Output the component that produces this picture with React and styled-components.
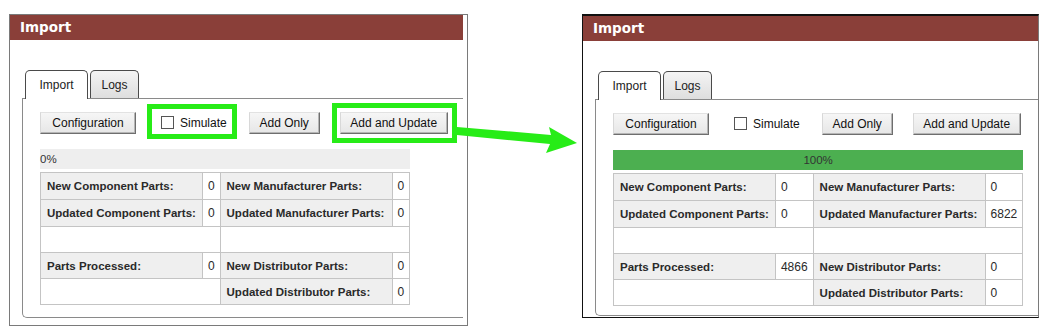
import React from "react";
import styled, { createGlobalStyle, css } from "styled-components";

const GlobalStyle = createGlobalStyle`
  body {
    margin: 0;
    background: #ffffff;
  }
`;

const FONT = `"Liberation Sans", Arial, sans-serif`;

const Stage = styled.div`
  position: relative;
  box-sizing: border-box;
  width: 1043px;
  height: 330px;
  overflow: hidden;
  display: flex;
  align-items: flex-start;
  padding: 14px 0 0 9px;
  font-family: ${FONT};
  color: #222;
`;

const Window = styled.section`
  box-sizing: border-box;
  width: ${(p) => p.$w}px;
  height: ${(p) => p.$h}px;
  margin-left: ${(p) => p.$ml || 0}px;
  border: 1px solid #7a7a7a;
  padding-right: ${(p) => p.$clip || 0}px;
  padding-bottom: ${(p) => p.$gap || 0}px;
  display: flex;
  flex-direction: column;
  overflow: hidden;
  ${(p) =>
    p.$dark &&
    css`
      border-color: #111 #7a7a7a #111 #111;
      border-top-width: 2px;
    `}
`;

const Header = styled.h2`
  margin: 0;
  height: 25px;
  line-height: 24px;
  padding-left: 10px;
  background: #8a3f39;
  color: #fff;
  font-family: "DejaVu Sans", sans-serif;
  font-size: 13.5px;
  font-weight: bold;
`;

const Body = styled.div`
  flex: 1;
  display: flex;
  flex-direction: column;
  padding: 30px 0 0 12px;
`;

const TabList = styled.div`
  display: flex;
  align-items: flex-end;
  gap: 2px;
  margin-left: 3px;
  height: 28px;
  position: relative;
  z-index: 1;
`;

const Tab = styled.div`
  box-sizing: border-box;
  width: ${(p) => p.$w}px;
  height: 28px;
  border: 1px solid #4a4a4a;
  border-bottom: none;
  border-radius: 5px 5px 0 0;
  display: flex;
  align-items: center;
  justify-content: center;
  font-size: 12px;
  color: #222;
  background: linear-gradient(#f4f4f4, #dedede);
  ${(p) =>
    p.$active &&
    css`
      height: 29px;
      margin-bottom: -1px;
      background: #fff;
    `}
`;

const TabPanel = styled.div`
  flex: 1;
  border: 1px solid #8a8a8a;
  border-right: none;
  border-radius: 0 0 0 5px;
  padding: 13px 0 0 17px;
`;

const ButtonRow = styled.div`
  display: flex;
  align-items: stretch;
  height: 22px;
`;

const Slot = styled.div`
  position: relative;
  display: flex;
  margin-left: ${(p) => p.$ml || 0}px;

  ${(p) =>
    p.$mark &&
    css`
      &::after {
        content: "";
        position: absolute;
        inset: ${p.$mark};
        border: 5px solid #27ec17;
        pointer-events: none;
      }
    `}
`;

const Button = styled.button`
  box-sizing: border-box;
  width: ${(p) => p.$w}px;
  height: 22px;
  padding: 0;
  font-family: ${FONT};
  font-size: 12px;
  color: #111;
  background: linear-gradient(#f6f6f6, #e6e6e6);
  border: 1px solid;
  border-color: #e2e2e2 #6e6e6e #6e6e6e #d8d8d8;
  box-shadow: inset -1px -1px 0 #b5b5b5;
`;

const CheckLabel = styled.label`
  display: flex;
  align-items: center;
  gap: 6px;
  font-size: 12px;
  color: #111;
`;

const Box = styled.span`
  box-sizing: border-box;
  width: 13px;
  height: 13px;
  border: 1px solid #555;
  background: #fff;
  margin-top: -1px;
`;

const Results = styled.div`
  display: flex;
  flex-direction: column;
  gap: 3px;
  width: fit-content;
  margin-top: 15px;
`;

const Progress = styled.div`
  height: 20px;
  background: #eeeeee;
  display: flex;
`;

const Fill = styled.div`
  height: 100%;
  background: #4caf50;
  text-align: center;
  white-space: nowrap;
  line-height: 20px;
  font-size: 11.5px;
  color: #333;
`;

const Table = styled.table`
  border-collapse: collapse;
  font-size: 12px;
`;

const Cell = styled.td`
  box-sizing: border-box;
  height: ${(p) => p.$h || 26}px;
  padding: 0 ${(p) => (p.$label ? 6 : 5)}px;
  border: 1px solid #c4c4c4;
  white-space: nowrap;
  background: ${(p) => (p.$label ? "#efefef" : "#fff")};
  font-weight: ${(p) => (p.$label ? "bold" : "normal")};
  font-size: ${(p) => (p.$label ? "11.5px" : "12px")};
  color: #2a2a2a;
  ${(p) => p.$w && css`width: ${p.$w}px;`}
`;

const Arrow = styled.svg`
  position: absolute;
  left: 450px;
  top: 120px;
`;

const Panel = ({ data, pct, marks, ...rest }) => (
  <Window {...rest}>
    <Header>Import</Header>
    <Body>
      <TabList>
        <Tab $active $w={63}>Import</Tab>
        <Tab $w={49}>Logs</Tab>
      </TabList>
      <TabPanel>
        <ButtonRow>
          <Slot>
            <Button $w={96}>Configuration</Button>
          </Slot>
          <Slot $ml={25} $mark={marks && "-8px -10px -5px -14px"}>
            <CheckLabel>
              <Box />
              Simulate
            </CheckLabel>
          </Slot>
          <Slot $ml={22}>
            <Button $w={71}>Add Only</Button>
          </Slot>
          <Slot $ml={20} $mark={marks && "-9px -9px -9px -8px"}>
            <Button $w={108}>Add and Update</Button>
          </Slot>
        </ButtonRow>
        <Results>
          <Progress>
            <Fill style={{ width: `${pct}%` }}>{pct}%</Fill>
          </Progress>
          <Table>
            <tbody>
              <tr>
                <Cell $label $w={160} $h={27}>New Component Parts:</Cell>
                <Cell $h={27}>{data.newComp}</Cell>
                <Cell $label $w={172} $h={27}>New Manufacturer Parts:</Cell>
                <Cell $h={27}>{data.newMfr}</Cell>
              </tr>
              <tr>
                <Cell $label $h={27}>Updated Component Parts:</Cell>
                <Cell $h={27}>{data.updComp}</Cell>
                <Cell $label $h={27}>Updated Manufacturer Parts:</Cell>
                <Cell $h={27}>{data.updMfr}</Cell>
              </tr>
              <tr>
                <Cell colSpan={2} />
                <Cell colSpan={2} />
              </tr>
              <tr>
                <Cell $label>Parts Processed:</Cell>
                <Cell>{data.processed}</Cell>
                <Cell $label>New Distributor Parts:</Cell>
                <Cell>{data.newDist}</Cell>
              </tr>
              <tr>
                <Cell colSpan={2} />
                <Cell $label>Updated Distributor Parts:</Cell>
                <Cell>{data.updDist}</Cell>
              </tr>
            </tbody>
          </Table>
        </Results>
      </TabPanel>
    </Body>
  </Window>
);

const before = { newComp: 0, newMfr: 0, updComp: 0, updMfr: 0, processed: 0, newDist: 0, updDist: 0 };
const after = { newComp: 0, newMfr: 0, updComp: 0, updMfr: 6822, processed: 4866, newDist: 0, updDist: 0 };

export default function App() {
  return (
    <>
      <GlobalStyle />
      <Stage>
        <Panel data={before} pct={0} marks $w={459} $h={312} $clip={4} $gap={7} />
        <Panel data={after} pct={100} $w={457} $h={304} $ml={114} $gap={1} $dark />
        <Arrow width="135" height="40" viewBox="0 0 135 40">
          <polygon
            points="7,7 101,15 99,7 127,23 96,33 100,24 7,15"
            fill="#27ec17"
          />
        </Arrow>
      </Stage>
    </>
  );
}
